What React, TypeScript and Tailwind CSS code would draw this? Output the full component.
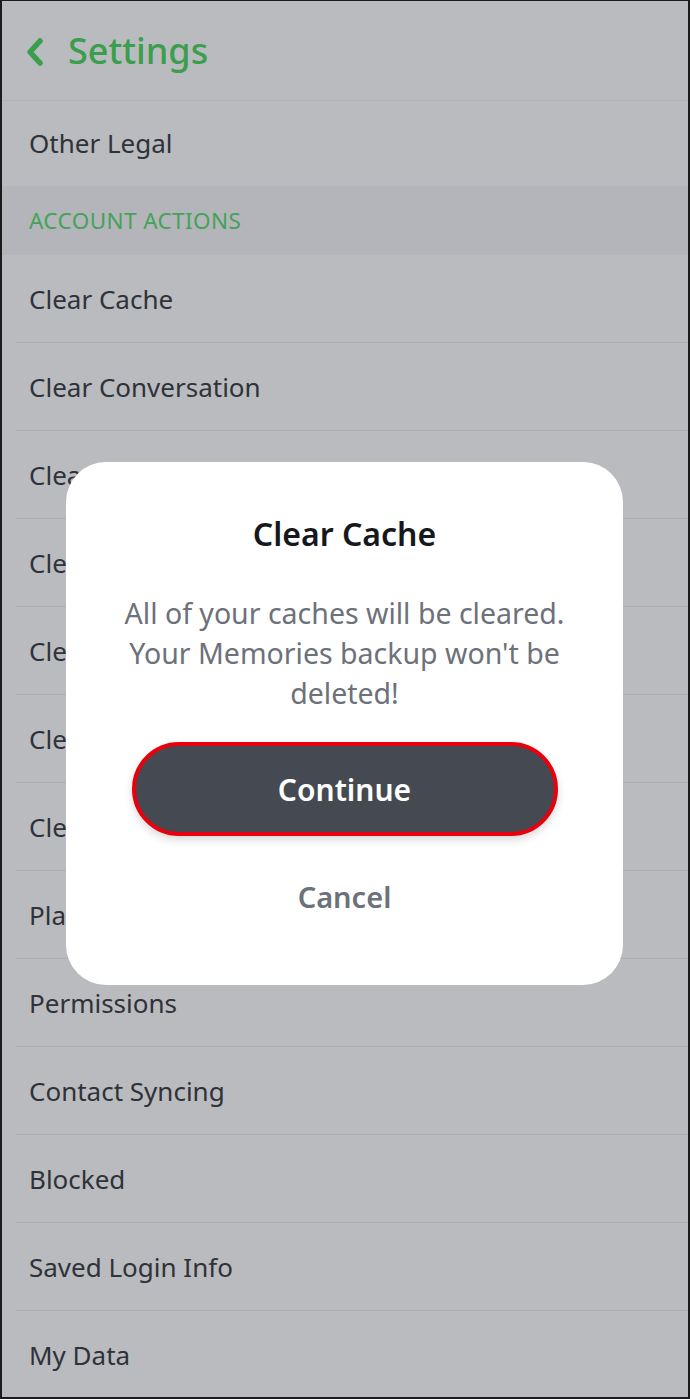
import React from 'react';

const rowsBeforeModal = [
  'Clear Cache',
  'Clear Conversation',
  'Clear Search History',
  'Clear Top Locations',
  'Clear Sticker Searches',
  'Clear Voice Scan History',
  'Clear Lens Data',
  'Placeholder Settings',
  'Permissions',
  'Contact Syncing',
  'Blocked',
  'Saved Login Info',
  'My Data',
];

function Row({ label, last }: { label: string; last?: boolean }) {
  return (
    <div className="relative flex h-[88px] shrink-0 items-center pl-[27px]">
      <span className="text-[26px] text-[#2f3238]">{label}</span>
      {!last && <div className="absolute bottom-0 left-[14px] right-0 h-px bg-[#acafb3]" />}
    </div>
  );
}

function ClearCacheDialog() {
  return (
    <div className="absolute left-[64px] top-[461px] flex h-[523px] w-[557px] flex-col items-center rounded-[40px] bg-white">
      <h2 className="mt-[54px] text-[32px] font-semibold leading-[36px] text-[#16181b]">Clear Cache</h2>
      <p className="mt-[41px] text-center text-[28.5px] leading-[40px] text-[#6c717a]">
        All of your caches will be cleared.
        <br />
        Your Memories backup won't be
        <br />
        deleted!
      </p>
      <button
        type="button"
        className="mt-[29px] flex h-[94px] w-[426px] items-center justify-center rounded-full border-4 border-[#e8000c] bg-[#454a52] text-[30px] font-semibold text-white shadow-[0_4px_8px_rgba(0,0,0,0.15)]"
      >
        Continue
      </button>
      <button type="button" className="mt-[43px] text-[29px] font-semibold leading-[36px] text-[#6c717a]">
        Cancel
      </button>
    </div>
  );
}

export default function App() {
  return (
    <div
      className="relative flex h-[1399px] w-[690px] flex-col overflow-hidden border-b-2 border-l-2 border-r-2 border-t border-[#1b1b1b] bg-[#b9bbbf]"
      style={{ fontFamily: '"Noto Sans", Lato, sans-serif' }}
    >
      <header className="relative flex h-[100px] shrink-0 items-center pl-[22px]">
        <svg width="22" height="30" viewBox="0 0 22 30" className="mr-[22px] mt-[2px]">
          <polyline
            points="16,4 6,15 16,26"
            fill="none"
            stroke="#3a9e4c"
            strokeWidth="5.5"
            strokeLinecap="round"
            strokeLinejoin="round"
          />
        </svg>
        <h1 className="text-[36px] font-medium text-[#3a9e4c]">Settings</h1>
        <div className="absolute bottom-0 left-0 right-0 h-px bg-[#b1b3b7]" />
      </header>
      <div className="flex h-[85px] shrink-0 items-center pl-[27px]">
        <span className="text-[26px] text-[#2f3238]">Other Legal</span>
      </div>
      <div className="flex h-[69px] shrink-0 items-center bg-[#b3b5ba] pl-[27px]">
        <span className="text-[22.5px] tracking-[0.4px] text-[#45a257]">ACCOUNT ACTIONS</span>
      </div>
      {rowsBeforeModal.map((label, i) => (
        <Row key={label} label={label} last={i === rowsBeforeModal.length - 1} />
      ))}
      <ClearCacheDialog />
    </div>
  );
}
